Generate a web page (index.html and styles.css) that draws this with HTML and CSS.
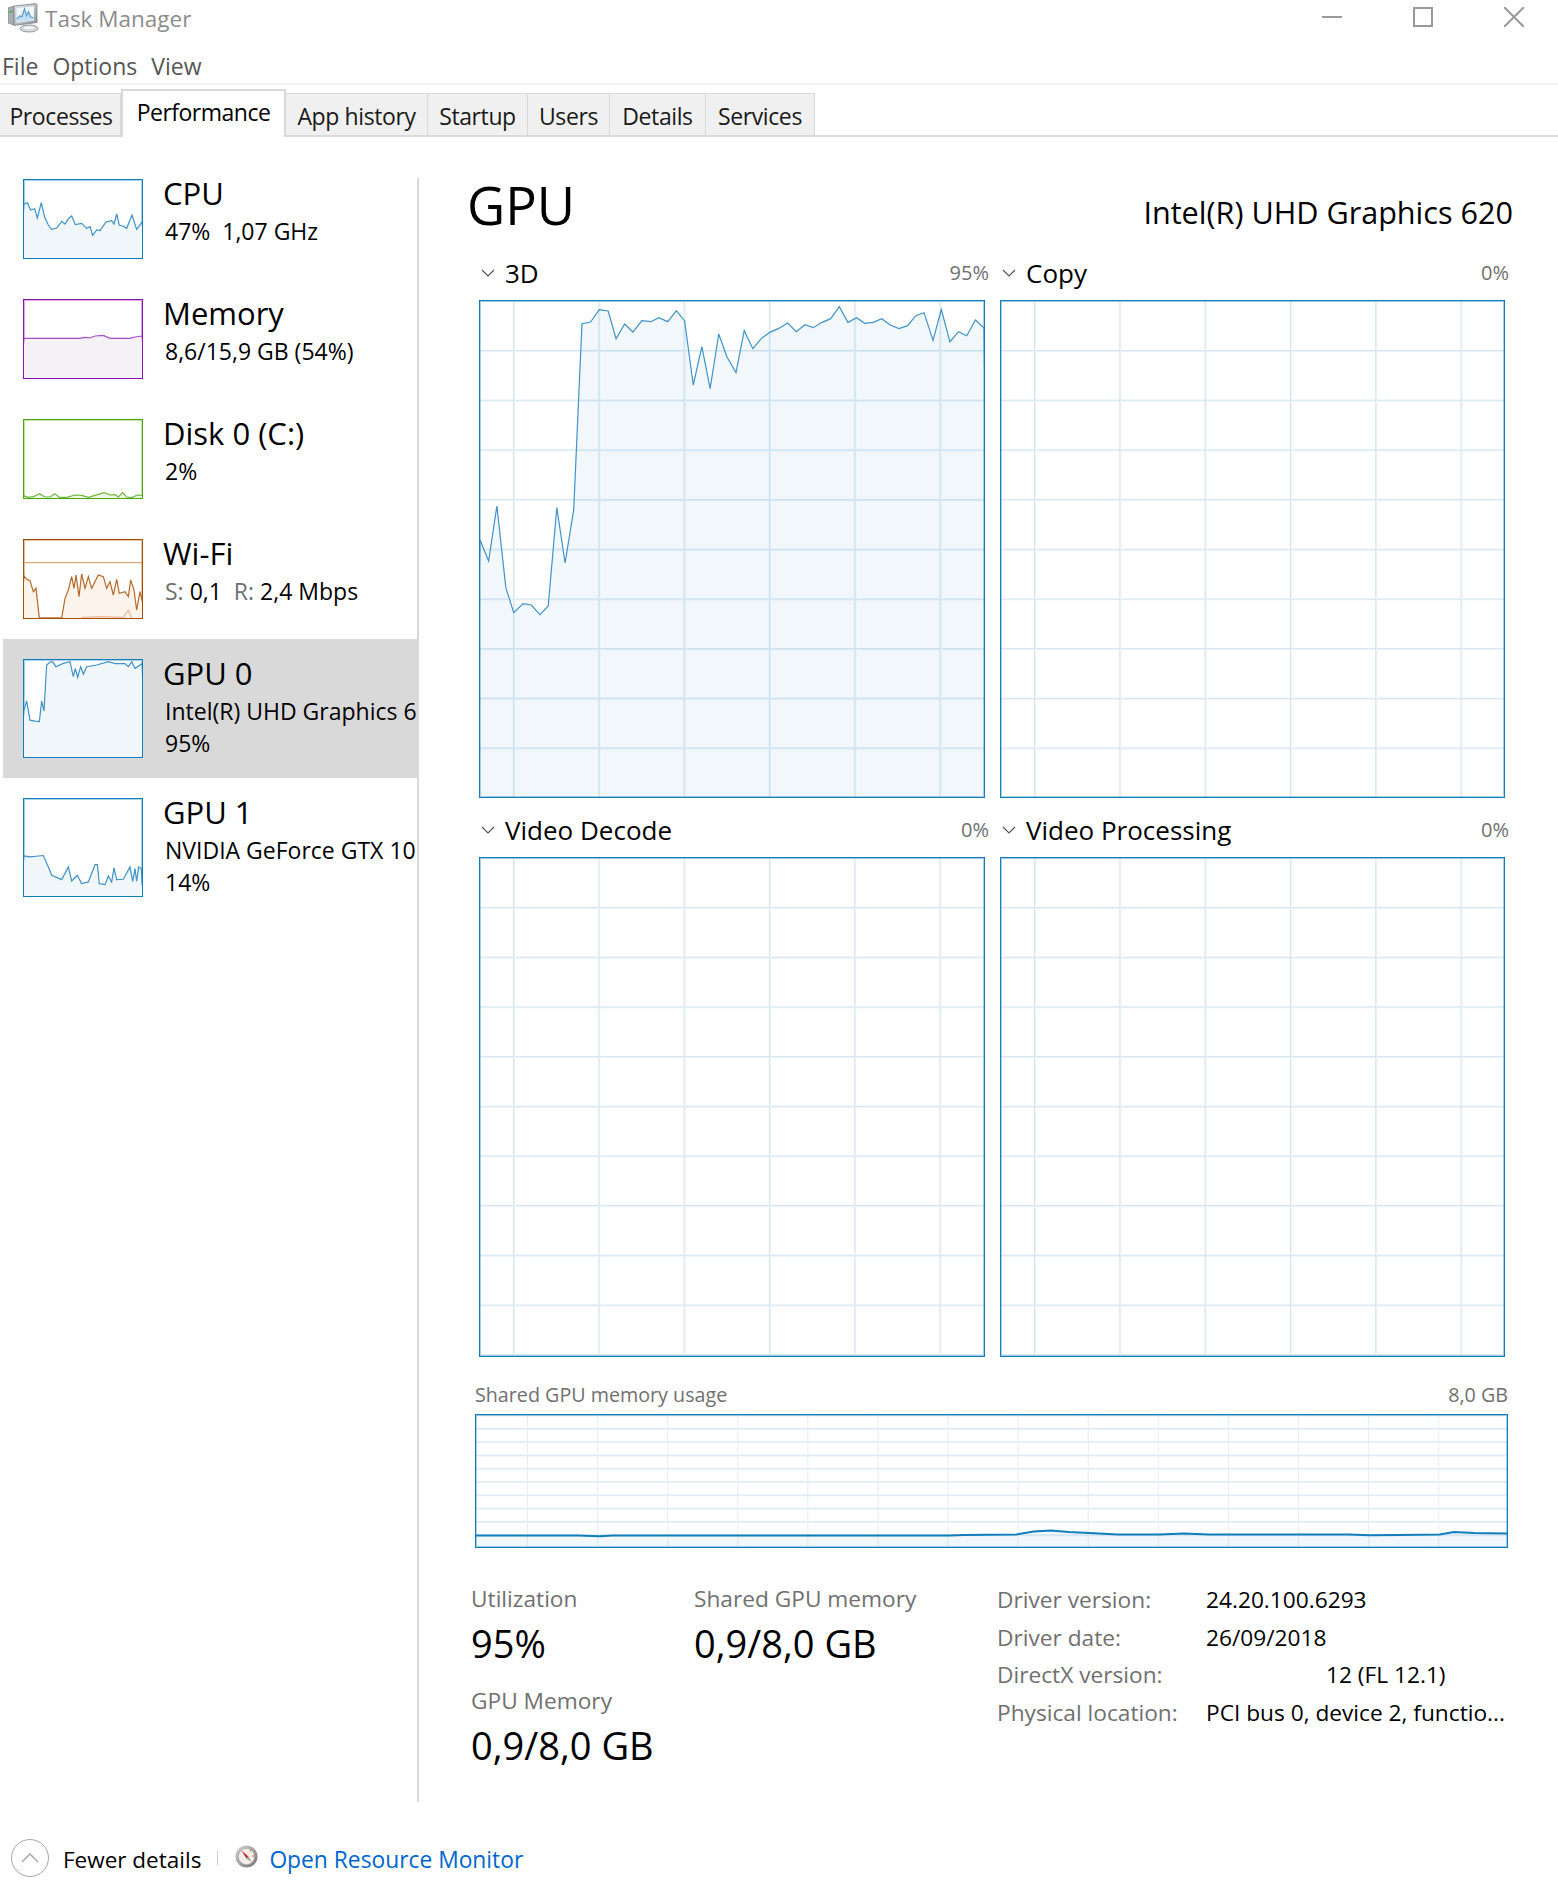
FILE: index.html
```html
<!DOCTYPE html>
<html lang="en">
<head>
    <meta charset="UTF-8">
    <title>Task Manager</title>
    <link rel="stylesheet" href="styles.css">
</head>
<body>
    <div class="titlebar">
        <svg class="app-icon" viewBox="0 0 32 30">
            <defs>
                <linearGradient id="frame" x1="0" y1="0" x2="1" y2="1">
                    <stop offset="0" stop-color="#e4e7e9"/>
                    <stop offset="1" stop-color="#8e959a"/>
                </linearGradient>
            </defs>
            <path d="M0 5l6-2v19l-6-2z" fill="#a9afb4" stroke="#70767b" stroke-width=".6"/>
            <path d="M1.2 8l3.4-1v2l-3.4 1z" fill="#5fae4a"/>
            <path d="M6 3l22-2.5 1 1v18l-23 3z" fill="url(#frame)" stroke="#6f767c" stroke-width=".7"/>
            <path d="M8.5 5l17.500-2v14.500l-17.500 2.200z" fill="#eef6fc"/>
            <path d="M9 16l3-3 2 1 2.500-8 2 7 2-4 2 5 3 1" fill="none" stroke="#3a84c4" stroke-width="1.200"/>
            <path d="M9 16l3-3 2 1 2.500-8 2 7 2-4 2 5 3 1v2l-17 2z" fill="#a9d0ee" opacity=".6"/>
            <ellipse cx="21" cy="25.500" rx="9" ry="3.500" fill="#d5d8da" stroke="#7d8287" stroke-width=".8"/>
            <ellipse cx="21" cy="24.800" rx="5" ry="1.500" fill="#f2f3f4"/>
        </svg>
        <span class="title">Task Manager</span>
        <div class="window-buttons">
            <svg viewBox="0 0 20 20"><path d="M0 10h20" /></svg>
            <svg viewBox="0 0 20 20"><path d="M1 1h18v18h-18z" /></svg>
            <svg viewBox="0 0 20 20"><path d="M0 0l20 20M20 0l-20 20" /></svg>
        </div>
    </div>

    <div class="menu">
        <span>File</span>
        <span>Options</span>
        <span>View</span>
    </div>

    <div class="tabs">
        <div class="tab tab-processes">Processes</div>
        <div class="tab tab-active">Performance</div>
        <div class="tab tab-history">App history</div>
        <div class="tab tab-startup">Startup</div>
        <div class="tab tab-users">Users</div>
        <div class="tab tab-details">Details</div>
        <div class="tab tab-services">Services</div>
    </div>

    <div class="content">
        <div class="sidebar">
            <div class="item">
                <div class="thumb thumb-blue">
                    <svg viewBox="72 60 354 234" preserveAspectRatio="none"><polyline points="60,320 72,132 82,128 92,150 104,146 112,174 124,128 134,172 145,195 155,208 170,204 185,184 195,192 205,176 215,168 226,194 245,190 260,205 270,200 278,226 290,210 300,212 318,186 335,182 342,192 350,162 358,196 368,198 380,205 396,165 410,208 426,186 440,320"/></svg>
                </div>
                <div class="item-text">
                    <div class="item-name">CPU</div>
                    <div class="item-sub">47%&nbsp; 1,07 GHz</div>
                </div>
            </div>
            <div class="item">
                <div class="thumb thumb-purple">
                    <svg viewBox="72 420 354 234" preserveAspectRatio="none"><polyline points="60,680 72,535 240,535 255,532 270,534 285,528 310,526 330,535 390,535 405,531 426,528 440,680"/></svg>
                </div>
                <div class="item-text">
                    <div class="item-name">Memory</div>
                    <div class="item-sub">8,6/15,9 GB (54%)</div>
                </div>
            </div>
            <div class="item">
                <div class="thumb thumb-green">
                    <svg viewBox="72 780 354 234" preserveAspectRatio="none"><polyline points="60,1040 72,1008 85,1012 100,1010 118,1001 135,1011 150,1011 165,1001 178,1012 200,1012 225,1005 245,1006 265,1012 285,1006 312,998 330,1005 345,1004 355,1011 368,998 380,1011 395,1013 412,1005 426,1006 440,1040"/></svg>
                </div>
                <div class="item-text">
                    <div class="item-name">Disk 0 (C:)</div>
                    <div class="item-sub">2%</div>
                </div>
            </div>
            <div class="item">
                <div class="thumb thumb-orange">
                    <svg viewBox="72 1140 354 234" preserveAspectRatio="none">
                        <path class="scale-line" d="M72 1208H426"/>
                        <polyline points="60,1400 72,1248 80,1258 90,1262 100,1295 108,1285 118,1374 185,1374 195,1315 205,1290 215,1250 222,1285 228,1245 237,1310 245,1242 255,1285 265,1250 275,1285 295,1245 310,1250 320,1285 330,1265 340,1305 350,1258 358,1300 375,1295 385,1310 392,1260 402,1290 410,1350 420,1295 426,1320 440,1400"/>
                        <path class="send-line" d="M245 1372L300 1370L370 1372L385 1350L395 1374"/>
                    </svg>
                </div>
                <div class="item-text">
                    <div class="item-name">Wi-Fi</div>
                    <div class="item-sub"><span class="dim">S:</span> 0,1&nbsp; <span class="dim">R:</span> 2,4 Mbps</div>
                </div>
            </div>
            <div class="item item-tall item-selected">
                <div class="thumb thumb-blue">
                    <svg viewBox="72 120 354 290" preserveAspectRatio="none"><polyline points="60,430 72,270 80,242 90,300 105,303 118,304 125,243 132,272 140,135 150,126 158,125 168,140 190,130 210,125 220,170 226,145 233,172 242,140 250,162 260,140 290,135 325,125 345,131 375,131 385,140 395,125 405,145 426,131 440,430"/></svg>
                </div>
                <div class="item-text">
                    <div class="item-name">GPU 0</div>
                    <div class="item-sub">Intel(R) UHD Graphics 620</div>
                    <div class="item-sub item-third">95%</div>
                </div>
            </div>
            <div class="item item-tall">
                <div class="thumb thumb-blue">
                    <svg viewBox="72 537 354 290" preserveAspectRatio="none"><polyline points="60,850 72,707 90,710 130,706 145,740 155,765 185,778 205,740 215,782 232,765 245,790 265,785 285,733 292,733 298,790 315,793 325,767 335,785 342,743 350,778 370,777 390,740 398,783 405,745 410,783 416,740 424,745 426,790 440,850"/></svg>
                </div>
                <div class="item-text">
                    <div class="item-name">GPU 1</div>
                    <div class="item-sub">NVIDIA GeForce GTX 1050</div>
                    <div class="item-sub item-third">14%</div>
                </div>
            </div>
        </div>

        <div class="divider"></div>

        <div class="main">
            <div class="main-head">
                <h1>GPU</h1>
                <div class="adapter">Intel(R) UHD Graphics 620</div>
            </div>

            <div class="graphs">
                <div class="cell">
                    <div class="cell-head">
                        <svg class="chevron" viewBox="0 0 14 8"><path d="M1 1l6 6 6-6"/></svg>
                        <span class="cell-name">3D</span>
                        <span class="cell-value">95%</span>
                    </div>
                    <div class="graph">
                        <svg viewBox="57 152 1463 1488" preserveAspectRatio="none"><polyline points="40,1700 57,868 82,932 106,767 132,1012 155,1087 182,1060 206,1064 231,1093 255,1067 280,772 304,938 329,778 353,220 378,215 403,178 429,182 452,265 477,221 501,245 527,211 553,214 576,202 602,214 627,181 651,212 676,404 701,289 725,415 750,251 774,320 800,367 824,241 849,295 874,264 898,246 923,235 950,218 975,244 1000,223 1024,232 1050,216 1075,205 1100,169 1125,216 1150,202 1174,219 1199,216 1223,205 1248,224 1273,235 1298,226 1322,196 1346,187 1372,270 1396,178 1421,274 1446,244 1470,256 1495,209 1520,233 1540,1700"/></svg>
                    </div>
                </div>
                <div class="cell">
                    <div class="cell-head">
                        <svg class="chevron" viewBox="0 0 14 8"><path d="M1 1l6 6 6-6"/></svg>
                        <span class="cell-name">Copy</span>
                        <span class="cell-value">0%</span>
                    </div>
                    <div class="graph"></div>
                </div>
                <div class="cell">
                    <div class="cell-head">
                        <svg class="chevron" viewBox="0 0 14 8"><path d="M1 1l6 6 6-6"/></svg>
                        <span class="cell-name">Video Decode</span>
                        <span class="cell-value">0%</span>
                    </div>
                    <div class="graph graph-low"></div>
                </div>
                <div class="cell">
                    <div class="cell-head">
                        <svg class="chevron" viewBox="0 0 14 8"><path d="M1 1l6 6 6-6"/></svg>
                        <span class="cell-name">Video Processing</span>
                        <span class="cell-value">0%</span>
                    </div>
                    <div class="graph graph-low"></div>
                </div>
            </div>

            <div class="shared-head">
                <span>Shared GPU memory usage</span>
                <span>8,0 GB</span>
            </div>
            <div class="shared-graph">
                <svg viewBox="24 136 1472 394" preserveAspectRatio="none"><polyline points="10,560 22,496 170,496 200,498 220,496 700,496 720,494 795,493 820,484 845,481 870,485 900,488 940,493 1000,493 1035,490 1070,493 1270,493 1300,495 1340,494 1400,493 1420,485 1450,488 1510,490 1510,560"/></svg>
            </div>

            <div class="stats">
                <div class="stat-col stat-col-util">
                    <div class="stat-label">Utilization</div>
                    <div class="stat-value">95%</div>
                    <div class="stat-label stat-label-next">GPU Memory</div>
                    <div class="stat-value">0,9/8,0 GB</div>
                </div>
                <div class="stat-col stat-col-shared">
                    <div class="stat-label">Shared GPU memory</div>
                    <div class="stat-value">0,9/8,0 GB</div>
                </div>
                <div class="info">
                    <div class="info-label">Driver version:</div><div>24.20.100.6293</div>
                    <div class="info-label">Driver date:</div><div>26/09/2018</div>
                    <div class="info-label">DirectX version:</div><div class="info-indent">12 (FL 12.1)</div>
                    <div class="info-label">Physical location:</div><div>PCI bus 0, device 2, functio...</div>
                </div>
            </div>
        </div>
    </div>

    <div class="footer">
        <span class="round-button">
            <svg viewBox="0 0 18 10"><path d="M1 9l8-8 8 8"/></svg>
        </span>
        <span class="fewer">Fewer details</span>
        <span class="footer-sep"></span>
        <svg class="monitor-icon" viewBox="0 0 24 24">
            <defs>
                <linearGradient id="ring" x1="0" y1="0" x2="1" y2="1">
                    <stop offset="0" stop-color="#d5d5d5"/>
                    <stop offset="1" stop-color="#6f6f6f"/>
                </linearGradient>
            </defs>
            <circle cx="12" cy="12" r="11.500" fill="url(#ring)"/>
            <circle cx="12" cy="12" r="8.500" fill="#f3eee8" stroke="#9a9a9a" stroke-width=".6"/>
            <path d="M6.500 5.500l7.500 6.500-2 2z" fill="#c8281e"/>
            <path d="M12 14l2-2 3.500 6z" fill="#9a9a9a"/>
            <path d="M15.500 6.500l1.500-1.500M18 11.500h2" stroke="#d98a3a" stroke-width="1.500"/>
        </svg>
        <a class="link" href="#">Open Resource Monitor</a>
    </div>
</body>
</html>
```

FILE: styles.css
```css
/* Task Manager, performance tab */

body {
    margin: 0;
    background-color: white;
    font-family: "Open Sans", "Noto Sans", sans-serif;
    color: #000;
    width: 1558px;
    height: 1902px;
    overflow: hidden;
}

/* title bar */
.titlebar {
    height: 50px;
    display: flex;
    align-items: flex-start;
    padding-left: 8px;
    box-sizing: border-box;
}
.app-icon {
    width: 32px;
    height: 30px;
    margin-top: 3px;
}
.title {
    margin-left: 5px;
    font-size: 22.5px;
    line-height: 38px;
    color: #8c8c8c;
}
.window-buttons {
    margin-left: auto;
    display: flex;
    gap: 71px;
    margin-top: 7px;
    margin-right: 34px;
}
.window-buttons svg {
    width: 20px;
    height: 20px;
    fill: none;
    stroke: #999;
    stroke-width: 2;
}

/* menu */
.menu {
    height: 33px;
    display: flex;
    gap: 14px;
    padding-left: 2px;
    border-bottom: 2px solid #f0f0f0;
    font-size: 23px;
    line-height: 32px;
    color: #555;
}

/* tabs */
.tabs {
    height: 52px;
    box-sizing: border-box;
    display: flex;
    align-items: flex-end;
    border-bottom: 2px solid #d9d9d9;
    font-size: 23px;
    letter-spacing: -0.4px;
}
.tab {
    height: 42px;
    box-sizing: border-box;
    background-color: #f0f0f0;
    border: 1px solid #d9d9d9;
    border-width: 1px 1px 0 0;
    text-align: center;
    line-height: 45px;
    color: #1a1a1a;
}
.tab-processes { width: 121px; padding-left: 2px; }
.tab-history { width: 142px; }
.tab-startup { width: 100px; }
.tab-users { width: 82px; }
.tab-details { width: 96px; }
.tab-services { width: 109px; }
.tab-active {
    width: 165px;
    height: 48px;
    margin-bottom: -2px;
    background-color: white;
    border-width: 2px 2px 0 2px;
    line-height: 43px;
    color: #000;
    letter-spacing: -0.5px;
}

.content {
    display: flex;
    height: 1683px;
}

/* left list */
.sidebar {
    width: 417px;
    padding-top: 22px;
    box-sizing: border-box;
}
.item {
    display: flex;
    height: 120px;
    box-sizing: border-box;
    padding: 20px 0 0 23px;
    overflow: hidden;
}
.item-tall {
    height: 139px;
}
.item-selected {
    margin-left: 3px;
    padding-left: 20px;
    background-color: #d9d9d9;
}
.thumb {
    width: 120px;
    height: 80px;
    box-sizing: border-box;
    border: 1px solid;
    flex-shrink: 0;
    background-color: white;
}
.item-tall .thumb {
    height: 99px;
}
.thumb svg {
    display: block;
    width: 100%;
    height: 100%;
}
.thumb polyline {
    stroke-width: 1.2;
    vector-effect: non-scaling-stroke;
}
.thumb-blue { border-color: #117dbb; box-shadow: inset 0 0 0 1px rgba(17, 125, 187, 0.35); }
.thumb-blue polyline { fill: #f1f6fa; stroke: #3f93c7; }
.thumb-purple { border-color: #8b12ae; box-shadow: inset 0 0 0 1px rgba(139, 18, 174, 0.35); }
.thumb-purple polyline { fill: #f4f2f4; stroke: #a64cc2; }
.thumb-green { border-color: #4da60c; box-shadow: inset 0 0 0 1px rgba(77, 166, 12, 0.35); }
.thumb-green polyline { fill: #eff7e8; stroke: #6cb83a; }
.thumb-orange { border-color: #a74f01; box-shadow: inset 0 0 0 1px rgba(167, 79, 1, 0.35); }
.thumb-orange polyline { fill: #fcf3eb; stroke: #b5692a; }
.scale-line { stroke: #dba678; stroke-width: 1.2; vector-effect: non-scaling-stroke; }
.send-line { fill: none; stroke: #eeb99b; stroke-width: 1.2; vector-effect: non-scaling-stroke; }

.item-text {
    margin-left: 20px;
    margin-top: -6px;
    white-space: nowrap;
}
.item-name {
    font-size: 31px;
    line-height: 40px;
}
.item-sub {
    margin-top: 2px;
    margin-left: 2px;
    font-size: 23px;
    line-height: 32px;
}
.item-third {
    margin-top: 0;
}
.dim {
    color: #707070;
}

.divider {
    width: 2px;
    height: 1624px;
    margin-top: 41px;
    background-color: #d9d9d9;
    flex-shrink: 0;
}

/* right panel */
.main {
    flex: 1;
    padding-left: 48px;
    box-sizing: border-box;
}
.main-head {
    height: 120px;
    display: flex;
    justify-content: space-between;
    width: 1046px;
}
h1 {
    margin: 18px 0 0;
    font-size: 52.5px;
    font-weight: 400;
    line-height: 100px;
}
.adapter {
    font-size: 30.6px;
    line-height: 42px;
    margin-top: 54px;
}
.graphs {
    margin-left: 12px;
    display: grid;
    grid-template-columns: 506px 505px;
    column-gap: 15px;
    row-gap: 16px;
}
.cell-head {
    height: 43px;
    box-sizing: border-box;
    padding-bottom: 12px;
    display: flex;
    align-items: center;
    margin-right: -4px;
}
.chevron {
    width: 14px;
    height: 8px;
    margin-left: 2px;
    margin-right: 10px;
    fill: none;
    stroke: #555;
    stroke-width: 1.2;
}
.cell-name {
    font-size: 26px;
}
.cell-value {
    margin-left: auto;
    font-size: 20px;
    color: #707070;
}
.graph {
    height: 498px;
    box-sizing: border-box;
    border: 1px solid #117dbb;
    box-shadow: inset 0 0 0 1px rgba(17, 125, 187, 0.35);
    background-image:
        linear-gradient(to right, #d5e6f1 1px, #eaf3f8 1px, #eaf3f8 2px, transparent 2px),
        linear-gradient(to bottom, #d5e6f1 1px, #eaf3f8 1px, #eaf3f8 2px, transparent 2px);
    background-size: 85.3px 100%, 100% 49.7px;
    background-position: 33px 0, 0 49px;
}
.graph-low {
    height: 500px;
}
.graph svg,
.shared-graph svg {
    display: block;
    width: 100%;
    height: 100%;
}
.graph polyline {
    fill: rgba(17, 125, 187, 0.06);
    stroke: #3f93c7;
    stroke-width: 1.2;
    vector-effect: non-scaling-stroke;
}
.shared-head {
    margin-top: 19px;
    margin-left: 8px;
    width: 1033px;
    display: flex;
    justify-content: space-between;
    font-size: 19.7px;
    line-height: 38px;
    color: #707070;
}
.shared-graph {
    margin-left: 8px;
    width: 1033px;
    height: 134px;
    box-sizing: border-box;
    border: 1px solid #117dbb;
    box-shadow: inset 0 0 0 1px rgba(17, 125, 187, 0.35);
    background-image:
        linear-gradient(to right, #e3eef6 1px, transparent 1px),
        linear-gradient(to bottom, #d9e8f2 1px, #eaf3f8 1px, #eaf3f8 2px, transparent 2px);
    background-size: 70.1px 100%, 100% 13.3px;
    background-position: 51px 0, 0 13px;
}
.shared-graph polyline {
    fill: rgba(17, 125, 187, 0.06);
    stroke: #117dbb;
    stroke-width: 2;
    vector-effect: non-scaling-stroke;
}

/* numbers at the bottom */
.stats {
    display: flex;
    margin-top: 32px;
    margin-left: 4px;
}
.stat-col-util { width: 223px; }
.stat-col-shared { width: 303px; }
.stat-label {
    font-size: 22.7px;
    line-height: 38px;
    color: #707070;
}
.stat-label-next {
    margin-top: 14px;
}
.stat-value {
    font-size: 38px;
    line-height: 50px;
}
.info {
    display: grid;
    grid-template-columns: 209px 1fr;
    align-content: start;
    margin-top: 1px;
    font-size: 22.7px;
    line-height: 37.7px;
    white-space: nowrap;
}
.info-label {
    color: #707070;
}
.info-indent {
    margin-left: 120px;
}

/* footer */
.footer {
    height: 76px;
    box-sizing: border-box;
    padding-left: 11px;
    display: flex;
    align-items: center;
    font-size: 22.8px;
}
.round-button {
    width: 38px;
    height: 38px;
    box-sizing: border-box;
    border: 1px solid #a8a8a8;
    border-radius: 50%;
    display: flex;
    align-items: center;
    justify-content: center;
}
.round-button svg {
    width: 18px;
    height: 10px;
    fill: none;
    stroke: #a8a8a8;
    stroke-width: 1.5;
}
.fewer {
    margin-left: 14px;
    padding-top: 2px;
    font-size: 22.5px;
}
.footer-sep {
    width: 1px;
    height: 14px;
    margin-left: 16px;
    background-color: #ccc;
}
.monitor-icon {
    width: 23px;
    height: 23px;
    margin-left: 17px;
    margin-top: -3px;
}
.link {
    margin-left: 11px;
    padding-top: 2px;
    color: #0066cc;
    text-decoration: none;
}
```
